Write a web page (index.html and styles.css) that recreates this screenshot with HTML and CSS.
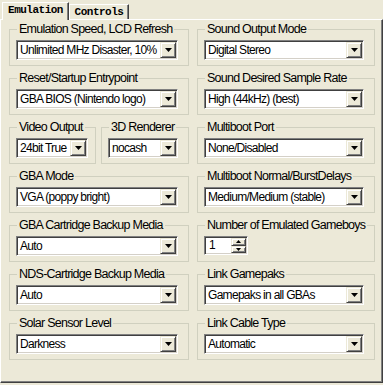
FILE: index.html
```html
<!DOCTYPE html>
<html lang="en">
<head>
    <meta charset="UTF-8">
    <title>Emulation</title>
    <link rel="stylesheet" href="styles.css">
</head>
<body>
    <div class="window">
        <div class="tabs">
            <div class="tab active">Emulation</div>
            <div class="tab">Controls</div>
        </div>
        <div class="panel">
            <div class="grid">
                <fieldset class="grp">
                    <legend>Emulation Speed, LCD Refresh</legend>
                    <div class="combo"><span class="txt">Unlimited MHz Disaster, 10%</span><span class="btn"><svg width="7" height="4" viewBox="0 0 7 4"><path d="M0 0h7L3.5 4z"/></svg></span></div>
                </fieldset>
                <fieldset class="grp">
                    <legend>Sound Output Mode</legend>
                    <div class="combo"><span class="txt">Digital Stereo</span><span class="btn"><svg width="7" height="4" viewBox="0 0 7 4"><path d="M0 0h7L3.5 4z"/></svg></span></div>
                </fieldset>

                <fieldset class="grp">
                    <legend>Reset/Startup Entrypoint</legend>
                    <div class="combo"><span class="txt">GBA BIOS (Nintendo logo)</span><span class="btn"><svg width="7" height="4" viewBox="0 0 7 4"><path d="M0 0h7L3.5 4z"/></svg></span></div>
                </fieldset>
                <fieldset class="grp">
                    <legend>Sound Desired Sample Rate</legend>
                    <div class="combo"><span class="txt">High (44kHz) (best)</span><span class="btn"><svg width="7" height="4" viewBox="0 0 7 4"><path d="M0 0h7L3.5 4z"/></svg></span></div>
                </fieldset>

                <div class="pair">
                    <fieldset class="grp small video">
                        <legend>Video Output</legend>
                        <div class="combo"><span class="txt">24bit True</span><span class="btn"><svg width="7" height="4" viewBox="0 0 7 4"><path d="M0 0h7L3.5 4z"/></svg></span></div>
                    </fieldset>
                    <fieldset class="grp small render">
                        <legend>3D Renderer</legend>
                        <div class="combo"><span class="txt">nocash</span><span class="btn"><svg width="7" height="4" viewBox="0 0 7 4"><path d="M0 0h7L3.5 4z"/></svg></span></div>
                    </fieldset>
                </div>
                <fieldset class="grp">
                    <legend>Multiboot Port</legend>
                    <div class="combo"><span class="txt">None/Disabled</span><span class="btn"><svg width="7" height="4" viewBox="0 0 7 4"><path d="M0 0h7L3.5 4z"/></svg></span></div>
                </fieldset>

                <fieldset class="grp">
                    <legend>GBA Mode</legend>
                    <div class="combo"><span class="txt">VGA (poppy bright)</span><span class="btn"><svg width="7" height="4" viewBox="0 0 7 4"><path d="M0 0h7L3.5 4z"/></svg></span></div>
                </fieldset>
                <fieldset class="grp">
                    <legend>Multiboot Normal/BurstDelays</legend>
                    <div class="combo"><span class="txt">Medium/Medium (stable)</span><span class="btn"><svg width="7" height="4" viewBox="0 0 7 4"><path d="M0 0h7L3.5 4z"/></svg></span></div>
                </fieldset>

                <fieldset class="grp">
                    <legend>GBA Cartridge Backup Media</legend>
                    <div class="combo"><span class="txt">Auto</span><span class="btn"><svg width="7" height="4" viewBox="0 0 7 4"><path d="M0 0h7L3.5 4z"/></svg></span></div>
                </fieldset>
                <fieldset class="grp">
                    <legend>Number of Emulated Gameboys</legend>
                    <div class="spin">
                        <span class="val">1</span>
                        <span class="arrows">
                            <span class="sb"><svg width="5" height="3" viewBox="0 0 5 3"><path d="M2.5 0L5 3H0z"/></svg></span>
                            <span class="sb"><svg width="5" height="3" viewBox="0 0 5 3"><path d="M0 0h5L2.5 3z"/></svg></span>
                        </span>
                    </div>
                </fieldset>

                <fieldset class="grp">
                    <legend>NDS-Cartridge Backup Media</legend>
                    <div class="combo"><span class="txt">Auto</span><span class="btn"><svg width="7" height="4" viewBox="0 0 7 4"><path d="M0 0h7L3.5 4z"/></svg></span></div>
                </fieldset>
                <fieldset class="grp">
                    <legend>Link Gamepaks</legend>
                    <div class="combo"><span class="txt">Gamepaks in all GBAs</span><span class="btn"><svg width="7" height="4" viewBox="0 0 7 4"><path d="M0 0h7L3.5 4z"/></svg></span></div>
                </fieldset>

                <fieldset class="grp">
                    <legend>Solar Sensor Level</legend>
                    <div class="combo"><span class="txt">Darkness</span><span class="btn"><svg width="7" height="4" viewBox="0 0 7 4"><path d="M0 0h7L3.5 4z"/></svg></span></div>
                </fieldset>
                <fieldset class="grp">
                    <legend>Link Cable Type</legend>
                    <div class="combo"><span class="txt">Automatic</span><span class="btn"><svg width="7" height="4" viewBox="0 0 7 4"><path d="M0 0h7L3.5 4z"/></svg></span></div>
                </fieldset>
            </div>
        </div>
    </div>
</body>
</html>
```

FILE: styles.css
```css
* {
    margin: 0;
    padding: 0;
    box-sizing: border-box;
}
body {
    background-color: #ece9d8;
    font-family: "Liberation Sans", Arial, sans-serif;
    font-size: 12.5px;
    letter-spacing: -0.75px;
    color: #000;
}
.window {
    width: 383px;
    height: 385px;
    padding-top: 2px;
}
.tabs {
    display: flex;
    align-items: flex-end;
    height: 17px;
    padding-left: 2px;
    position: relative;
    z-index: 1;
}
.tab {
    width: 60px;
    height: 15px;
    font-family: "Liberation Mono", monospace;
    font-weight: bold;
    font-size: 11px;
    letter-spacing: -0.5px;
    line-height: 14px;
    text-align: center;
    background-color: #ece9d8;
    border: 1px solid #fff;
    border-right-color: #404040;
    border-bottom: none;
    box-shadow: inset -1px 0 #808080;
}
.tab.active {
    width: 67px;
    height: 18px;
    margin-bottom: -1px;
    line-height: 15px;
}
.panel {
    width: 383px;
    height: 364px;
    border: 1px solid #fff;
    border-right-color: #404040;
    border-bottom-color: #404040;
    box-shadow: inset -1px -1px #808080;
    padding: 2px 0 0 8px;
}
.grid {
    display: grid;
    grid-template-columns: 180px 178px;
    column-gap: 8px;
    row-gap: 5px;
}
.grp {
    border: 1px solid #d0d0bf;
    padding: 4px 10px 5px 6px;
    min-width: 0;
}
.grp legend {
    padding: 0 2px;
    margin-left: 1px;
    line-height: 14px;
    white-space: nowrap;
}
.pair {
    display: flex;
    gap: 5px;
}
.grp.video {
    width: 87px;
    padding-right: 7px;
}
.grp.render {
    flex: 1;
}
.combo {
    display: flex;
    height: 20px;
    background-color: #fff;
    border: 1px solid;
    border-color: #808080 #fff #fff #808080;
    box-shadow: inset 1px 1px #404040, inset -1px -1px #d4d0c8;
    padding: 1px;
}
.combo .txt {
    flex: 1;
    padding-left: 2px;
    line-height: 16px;
    font-size: 12px;
    letter-spacing: -0.7px;
    white-space: nowrap;
    overflow: hidden;
}
.btn, .sb {
    display: flex;
    align-items: center;
    justify-content: center;
    background-color: #ece9d8;
    border: 1px solid;
    border-color: #ece9d8 #404040 #404040 #ece9d8;
    box-shadow: inset 1px 1px #fff, inset -1px -1px #808080;
}
.btn {
    width: 16px;
    height: 16px;
}
.spin {
    display: flex;
    width: 44px;
    height: 19px;
    background-color: #fff;
    border: 1px solid;
    border-color: #808080 #fff #fff #808080;
    box-shadow: inset 1px 1px #404040, inset -1px -1px #d4d0c8;
    padding: 1px;
}
.spin .val {
    flex: 1;
    padding-left: 3px;
    line-height: 15px;
    font-size: 12px;
}
.spin .arrows {
    display: flex;
    flex-direction: column;
    width: 15px;
}
.sb {
    flex: 1;
}
```
